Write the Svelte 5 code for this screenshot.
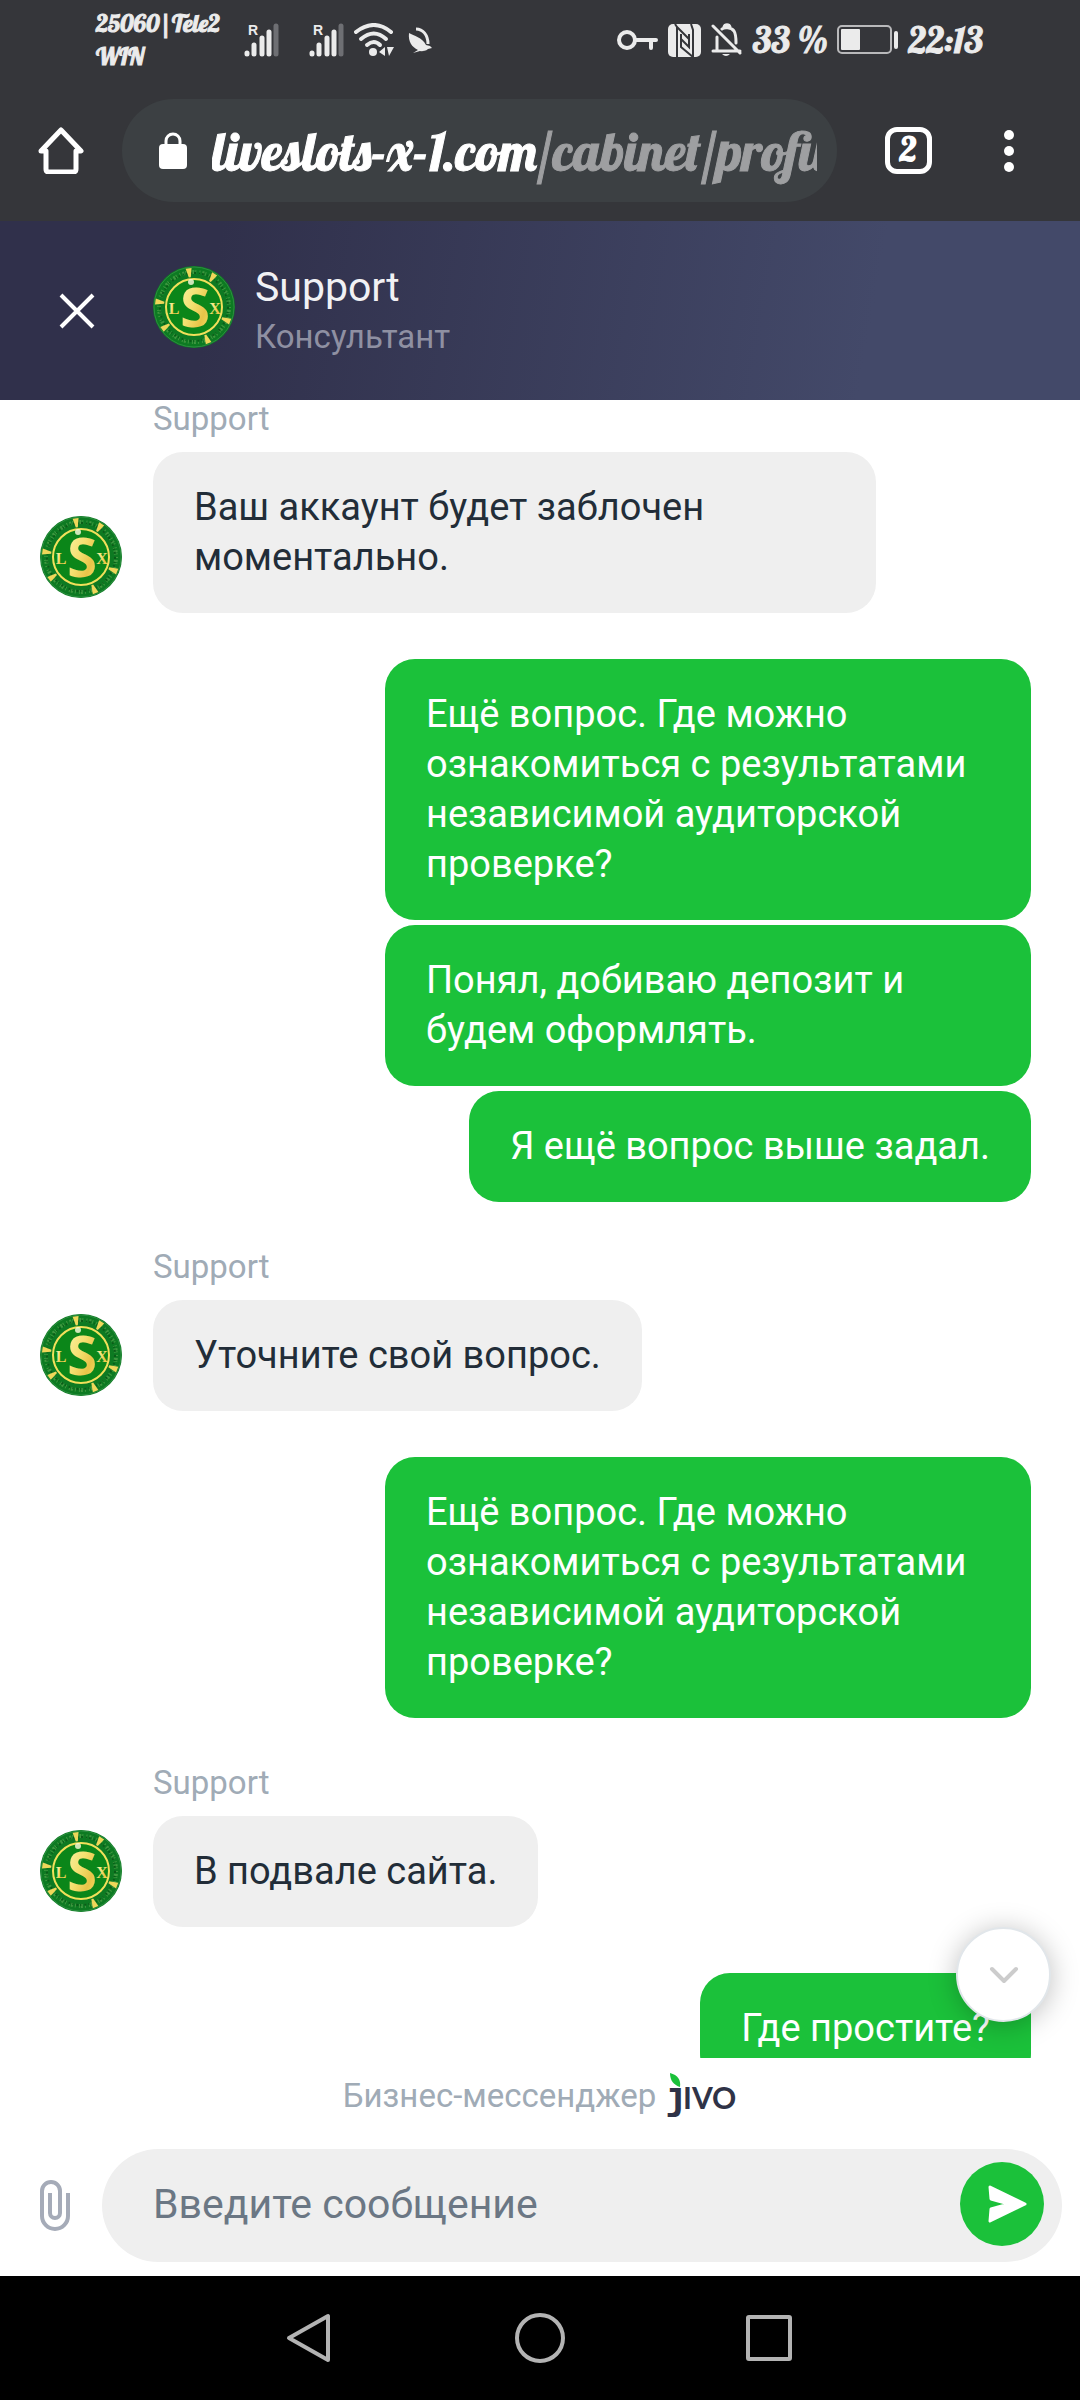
<script lang="ts">
  interface Group {
    from: 'agent' | 'client';
    texts: string[];
  }

  const groups: Group[] = [
    { from: 'agent', texts: ['Ваш аккаунт будет заблочен моментально.'] },
    {
      from: 'client',
      texts: [
        'Ещё вопрос. Где можно ознакомиться с результатами независимой аудиторской проверке?',
        'Понял, добиваю депозит и будем оформлять.',
        'Я ещё вопрос выше задал.',
      ],
    },
    { from: 'agent', texts: ['Уточните свой вопрос.'] },
    {
      from: 'client',
      texts: ['Ещё вопрос. Где можно ознакомиться с результатами независимой аудиторской проверке?'],
    },
    { from: 'agent', texts: ['В подвале сайта.'] },
    { from: 'client', texts: ['Где простите?'] },
  ];

  // angles of the gold wedges on the badge rim
  const wedges = [-8, 32, 112, 158, 235, 278];

  let message = $state('');
</script>

{#snippet avatar()}
  <svg class="avatar" viewBox="0 0 82 82" aria-hidden="true">
    <defs>
      <linearGradient id="gold" x1="0" y1="0" x2="1" y2="1">
        <stop offset="0" stop-color="#fdf6b0" />
        <stop offset="0.45" stop-color="#f4e070" />
        <stop offset="0.7" stop-color="#e8c448" />
        <stop offset="1" stop-color="#f8ea70" />
      </linearGradient>
    </defs>
    <circle cx="41" cy="41" r="41" fill="#0d7a22" />
    <circle cx="41" cy="41" r="40" fill="none" stroke="#2b8f3f" stroke-width="1" />
    <circle cx="41" cy="41" r="35" fill="none" stroke="#6fb35c" stroke-width="4" stroke-dasharray="1 2 2 1 1 3" opacity="0.5" />
    <circle cx="41" cy="41" r="34" fill="none" stroke="#0a5c18" stroke-width="2" stroke-dasharray="2 3 1 2" />
    {#each wedges as angle}
      <path d="M38 2 L44 2 L42 11 L40 11 Z" fill="#efd75a" transform="rotate({angle} 41 41)" />
    {/each}
    <circle cx="41" cy="41" r="28" fill="#0b8619" stroke="#f1e05a" stroke-width="2" />
    <g fill="url(#gold)" text-anchor="middle">
      <text class="badge-main" x="42" y="61">S</text>
      <text class="badge-side" x="21" y="48">L</text>
      <text class="badge-side" x="62" y="48">X</text>
    </g>
    <circle cx="38" cy="16" r="3" fill="#fffde0" opacity="0.8" />
  </svg>
{/snippet}

{#snippet signal()}
  <svg width="35" height="34" viewBox="0 0 35 34" aria-hidden="true">
    <text class="roaming" x="4" y="12">R</text>
    <g stroke="#ebebeb" stroke-width="5" stroke-linecap="round">
      <path d="M3 30v1M10 22v9M18 15v16M25 9v22" />
      <path d="M32 3v28" stroke="#6e6f73" />
    </g>
  </svg>
{/snippet}

<div class="screen">
  <div class="status">
    <span class="carrier">25060|Tele2<br />WIN</span>
    <div class="signals">
      {@render signal()}
      {@render signal()}
    </div>
    <svg width="40" height="34" viewBox="0 0 40 34" aria-hidden="true">
      <g fill="none" stroke="#ebebeb" stroke-width="4" stroke-linecap="round">
        <path d="M2 9Q20-5 37 9" />
        <path d="M7 16Q20 5 32 16" />
        <path d="M13 22Q20 16 26 22" />
      </g>
      <circle cx="19" cy="29" r="4" fill="#ebebeb" />
      <path d="M25 29l6-5v9zM33 24h7l-5 9z" fill="#ebebeb" />
    </svg>
    <svg class="bird" width="25" height="26" viewBox="0 0 25 26" aria-hidden="true">
      <path d="M1 6c5 3 13 4 17 12l4 1 2 2-4 1c-2 2-5 2-7 2l3 1-4-1-7 2 5-3C4 20 0 15 1 6z" fill="#ebebeb" />
      <path d="M8 2c7 0 12 6 12 15" fill="none" stroke="#ebebeb" stroke-width="3" />
    </svg>

    <div class="status-right">
      <svg width="41" height="20" viewBox="0 0 41 20" aria-hidden="true">
        <circle cx="10" cy="10" r="8" fill="none" stroke="#ebebeb" stroke-width="4" />
        <path d="M18 10h21M34 10v8" fill="none" stroke="#ebebeb" stroke-width="4" stroke-linecap="round" />
      </svg>
      <svg width="33" height="33" viewBox="0 0 33 33" aria-hidden="true">
        <rect width="33" height="33" rx="5" fill="#ebebeb" />
        <g fill="none" stroke="#35363a" stroke-width="2">
          <path d="M9 33V3L7 0M9 3l12 12v-5" />
          <path d="M13 10v13l12 10M25 33V6l-2-6M13 15l8 8v-9" />
        </g>
      </svg>
      <svg width="32" height="34" viewBox="0 0 32 34" aria-hidden="true">
        <g fill="none" stroke="#ebebeb" stroke-width="3" stroke-linecap="round">
          <path d="M2 28h27M6 27V14M11 6c2-2 9-2 12 2 2 3 2 6 2 12M13 4c1-3 5-3 6 0M2 3l27 27" />
        </g>
        <path d="M11 31h8q-4 4-8 0z" fill="#ebebeb" />
      </svg>
      <span class="clock">33 %</span>
      <svg width="62" height="30" viewBox="0 0 62 30" aria-hidden="true">
        <rect x="1" y="1" width="53" height="27" rx="4" fill="none" stroke="#b9b9bb" stroke-width="2" />
        <rect x="4" y="4" width="19" height="21" rx="1" fill="#ebebeb" />
        <rect x="57" y="6" width="4" height="18" rx="2" fill="#ebebeb" />
      </svg>
      <span class="clock">22:13</span>
    </div>
  </div>

  <div class="toolbar">
    <button class="icon-btn" aria-label="Home">
      <svg width="46" height="47" viewBox="0 0 46 47">
        <path d="M3 24L23 3l20 21h-5v18q0 3-3 3H11q-3 0-3-3V24z" fill="none" stroke="#fff" stroke-width="5" stroke-linejoin="round" />
      </svg>
    </button>
    <div class="url">
      <svg width="28" height="37" viewBox="0 0 28 37" aria-hidden="true">
        <rect y="12" width="28" height="25" rx="4" fill="#fff" />
        <path d="M7 14V9a7 7 0 0 1 14 0v5" fill="none" stroke="#fff" stroke-width="3" />
      </svg>
      <a href="#cabinet"><span class="host">liveslots-x-1.com</span>/cabinet/profile</a>
    </div>
    <button class="icon-btn tabs" aria-label="Tabs"><span>2</span></button>
    <button class="icon-btn menu" aria-label="Menu">
      <svg width="12" height="44" viewBox="0 0 12 44" fill="#fff">
        <circle cx="6" cy="6" r="5" />
        <circle cx="6" cy="22" r="5" />
        <circle cx="6" cy="38" r="5" />
      </svg>
    </button>
  </div>

  <header class="chat-header">
    <button class="icon-btn" aria-label="Закрыть">
      <svg width="36" height="36" viewBox="0 0 36 36">
        <path d="M2 2l32 32M34 2L2 34" stroke="#fff" stroke-width="4" />
      </svg>
    </button>
    <div class="agent">
      {@render avatar()}
      <div class="agent-info">
        <div class="agent-name">Support</div>
        <div class="agent-role">Консультант</div>
      </div>
    </div>
  </header>

  <main class="chat">
    <div class="messages">
      {#each groups as group}
        {#if group.from === 'agent'}
          <div class="group">
            <div class="label">Support</div>
            {#each group.texts as text}
              <div class="row">
                {@render avatar()}
                <p class="bubble">{text}</p>
              </div>
            {/each}
          </div>
        {:else}
          <div class="group client">
            {#each group.texts as text}
              <p class="bubble">{text}</p>
            {/each}
          </div>
        {/if}
      {/each}
    </div>
    <button class="icon-btn scroll-down" aria-label="Вниз">
      <svg width="30" height="18" viewBox="0 0 30 18">
        <path d="M3 3l12 12L27 3" fill="none" stroke="#ccc" stroke-width="4" stroke-linecap="round" stroke-linejoin="round" />
      </svg>
    </button>
  </main>

  <div class="brand">
    <span>Бизнес-мессенджер</span>
    <svg class="jivo" width="67" height="46" viewBox="0 0 67 46" role="img" aria-label="jivo">
      <path d="M0 0c8 2 11 7 10 14C4 12 0 8 0 0z" fill="#1bc13a" />
      <text y="36" fill="#2f3347"><tspan class="stem" x="-5">ȷ</tspan><tspan class="caps" x="13">IVO</tspan></text>
    </svg>
  </div>

  <form class="composer" onsubmit={(e) => e.preventDefault()}>
    <button type="button" class="icon-btn" aria-label="Прикрепить файл">
      <svg width="30" height="52" viewBox="0 0 30 52">
        <path d="M28 13v23a13 13 0 0 1-26 0V11a9 9 0 0 1 18 0v22a5 5 0 0 1-10 0V13" fill="none" stroke="#a5abb8" stroke-width="4" />
      </svg>
    </button>
    <div class="field">
      <input type="text" bind:value={message} placeholder="Введите сообщение" aria-label="Введите сообщение" />
      <button type="submit" class="icon-btn send" aria-label="Отправить">
        <svg width="40" height="38" viewBox="0 0 40 38">
          <path d="M2 2l35 17L2 36l1-12 18-5L3 14z" fill="#fff" stroke="#fff" stroke-width="3" stroke-linejoin="round" />
        </svg>
      </button>
    </div>
  </form>

  <nav class="system-nav">
    <button class="icon-btn" aria-label="Back">
      <svg width="50" height="50" viewBox="0 0 50 50">
        <path d="M42 3v44L3 25z" />
      </svg>
    </button>
    <button class="icon-btn" aria-label="Home screen">
      <svg width="50" height="50" viewBox="0 0 50 50">
        <circle cx="25" cy="25" r="23" />
      </svg>
    </button>
    <button class="icon-btn" aria-label="Recent apps">
      <svg width="50" height="50" viewBox="0 0 50 50">
        <rect x="4" y="4" width="42" height="42" rx="1" />
      </svg>
    </button>
  </nav>
</div>

<style>
  :global(body) {
    margin: 0;
  }

  .screen {
    display: flex;
    flex-direction: column;
    height: 100vh;
    background: #fff;
    font-family: Roboto, 'Liberation Sans', sans-serif;
  }

  svg {
    display: block;
    flex: none;
  }

  .icon-btn {
    display: flex;
    flex: none;
    align-items: center;
    justify-content: center;
    padding: 0;
    border: none;
    background: none;
    cursor: pointer;
  }

  /* phone status bar */
  .status {
    display: flex;
    align-items: center;
    height: 80px;
    padding: 0 97px 0 96px;
    background: #35363a;
    color: #ebebeb;
    font-family: Lobster, 'Liberation Serif', serif;
  }

  .carrier {
    width: 148px;
    font-size: 24px;
    line-height: 33px;
    white-space: nowrap;
    -webkit-text-stroke: 1px #ebebeb;
  }

  .signals {
    display: flex;
    gap: 30px;
    margin-right: 10px;
  }

  .roaming {
    fill: #ebebeb;
    font: bold 14px 'Liberation Sans Narrow', 'Liberation Sans', sans-serif;
  }

  .bird {
    margin-left: 14px;
  }

  .status-right {
    display: flex;
    align-items: center;
    gap: 10px;
    margin-left: auto;
  }

  .clock {
    font-size: 36px;
    line-height: 40px;
    white-space: nowrap;
    -webkit-text-stroke: 1px #ebebeb;
  }

  /* browser toolbar */
  .toolbar {
    display: flex;
    align-items: center;
    gap: 38px;
    height: 141px;
    padding: 0 41px 0 38px;
    background: #35363a;
    font-family: Lobster, 'Liberation Serif', serif;
  }

  .url {
    display: flex;
    flex: 1;
    align-items: center;
    gap: 25px;
    min-width: 0;
    height: 103px;
    padding: 0 20px 0 37px;
    box-sizing: border-box;
    border-radius: 52px;
    background: #3c4043;
  }

  .url a {
    overflow: hidden;
    color: #9e9fa1;
    font-size: 53px;
    line-height: 70px;
    text-decoration: none;
    white-space: nowrap;
    -webkit-text-stroke: 1px currentColor;
  }

  .url .host {
    color: #fff;
    -webkit-text-stroke: 1px #fff;
  }

  .tabs {
    width: 66px;
  }

  .tabs span {
    width: 37px;
    height: 37px;
    border: 5px solid #fff;
    border-radius: 12px;
    color: #fff;
    font: bold 34px/34px Lobster, 'Liberation Serif', serif;
  }

  .menu {
    width: 60px;
  }

  /* chat widget */
  .chat-header {
    display: flex;
    align-items: center;
    gap: 58px;
    height: 179px;
    padding: 0 59px;
    background: linear-gradient(100deg, #30304b 20%, #434969 80%);
  }

  .agent {
    display: flex;
    align-items: center;
    gap: 20px;
    padding-bottom: 8px;
  }

  .agent-info {
    padding-top: 10px;
  }

  .agent-name {
    color: #f1f1f4;
    font-size: 41px;
    line-height: 50px;
  }

  .agent-role {
    color: #8f90a2;
    font-size: 33px;
    line-height: 50px;
  }

  .avatar {
    width: 82px;
    height: 82px;
  }

  .badge-main {
    font: bold 54px 'Open Sans', sans-serif;
  }

  .badge-side {
    font: bold 16px 'Liberation Serif', serif;
  }

  .chat {
    position: relative;
    flex: 1;
    min-height: 0;
  }

  .messages {
    display: flex;
    flex-direction: column;
    gap: 46px;
    height: 100%;
    padding: 0 49px 0 40px;
    box-sizing: border-box;
    overflow-y: auto;
    scrollbar-width: none;
  }

  .group {
    flex: none;
  }

  .label {
    margin: 0 0 14px 113px;
    color: #a0abb6;
    font-size: 33px;
    line-height: 38px;
  }

  .row {
    display: flex;
    align-items: flex-end;
    gap: 31px;
  }

  .row .avatar {
    margin-bottom: 15px;
  }

  .bubble {
    max-width: 723px;
    margin: 0;
    padding: 30px 41px 31px;
    box-sizing: border-box;
    border-radius: 30px;
    background: #efefef;
    color: #222d38;
    font-size: 38px;
    line-height: 50px;
  }

  .client {
    display: flex;
    flex-direction: column;
    align-items: flex-end;
    gap: 5px;
  }

  .client .bubble {
    max-width: 646px;
    background: #1bc13a;
    color: #fff;
  }

  .scroll-down {
    position: absolute;
    right: 29px;
    bottom: 36px;
    width: 95px;
    height: 95px;
    border: 2px solid #e1e6ea;
    border-radius: 50%;
    background: #fff;
    box-shadow: 0 3px 28px rgba(0, 0, 0, 0.25);
  }

  .brand {
    display: flex;
    align-items: center;
    justify-content: center;
    gap: 14px;
    padding: 15px 0 30px;
    color: #a0abb6;
    font-size: 33px;
    line-height: 38px;
  }

  .jivo {
    overflow: visible;
  }

  .stem {
    font: bold 38px 'DejaVu Sans Mono', monospace;
  }

  .caps {
    font: bold 30px Lato, 'Liberation Sans', sans-serif;
  }

  .composer {
    display: flex;
    align-items: center;
    gap: 32px;
    padding: 0 18px 14px 40px;
  }

  .field {
    display: flex;
    flex: 1;
    align-items: center;
    min-width: 0;
    height: 113px;
    padding: 0 18px 4px 51px;
    box-sizing: border-box;
    border-radius: 57px;
    background: #efefef;
  }

  .field input {
    flex: 1;
    min-width: 0;
    padding: 0;
    border: none;
    outline: none;
    background: none;
    color: #222d38;
    font: 41px/50px Roboto, 'Liberation Sans', sans-serif;
  }

  .field input::placeholder {
    color: #6b7784;
    opacity: 1;
  }

  .send {
    width: 84px;
    height: 84px;
    padding-left: 12px;
    border-radius: 50%;
    background: #1bc13a;
  }

  .system-nav {
    display: flex;
    align-items: center;
    justify-content: center;
    gap: 179px;
    height: 124px;
    background: #000;
  }

  .system-nav svg {
    fill: none;
    stroke: #b3b3b3;
    stroke-width: 4px;
    stroke-linejoin: round;
  }
</style>
